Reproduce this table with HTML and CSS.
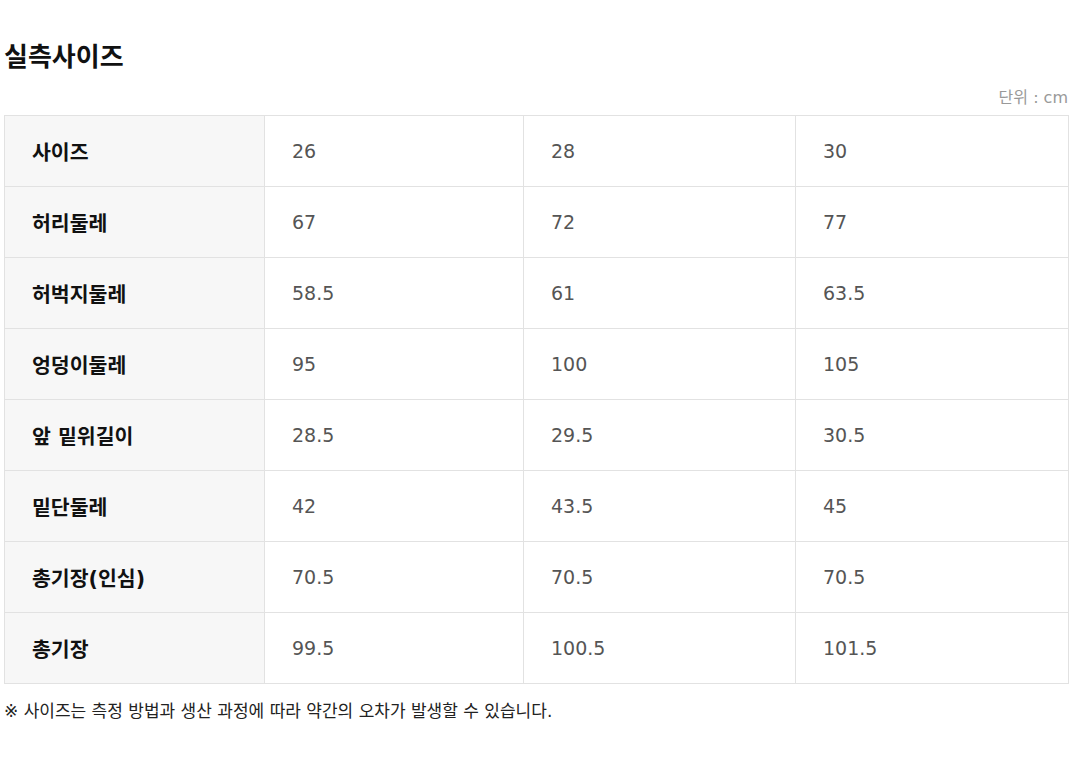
FILE: index.html
```html
<!DOCTYPE html>
<html lang="ko">
<head>
<meta charset="utf-8">
<link rel="stylesheet" href="styles.css">
</head>
<body>
<div class="page">
  <h2 class="title">실측사이즈</h2>
  <div class="unit">단위 : cm</div>
  <table class="size-table">
    <colgroup>
      <col class="c1"><col class="c2"><col class="c3"><col class="c4">
    </colgroup>
    <tbody>
      <tr><th>사이즈</th><td>26</td><td>28</td><td>30</td></tr>
      <tr><th>허리둘레</th><td>67</td><td>72</td><td>77</td></tr>
      <tr><th>허벅지둘레</th><td>58.5</td><td>61</td><td>63.5</td></tr>
      <tr><th>엉덩이둘레</th><td>95</td><td>100</td><td>105</td></tr>
      <tr><th>앞 밑위길이</th><td>28.5</td><td>29.5</td><td>30.5</td></tr>
      <tr><th>밑단둘레</th><td>42</td><td>43.5</td><td>45</td></tr>
      <tr><th>총기장(인심)</th><td>70.5</td><td>70.5</td><td>70.5</td></tr>
      <tr><th>총기장</th><td>99.5</td><td>100.5</td><td>101.5</td></tr>
    </tbody>
  </table>
  <p class="note">※ 사이즈는 측정 방법과 생산 과정에 따라 약간의 오차가 발생할 수 있습니다.</p>
</div>
</body>
</html>
```

FILE: styles.css
```css
html, body {
  margin: 0;
  padding: 0;
  background: #fff;
}
body {
  font-family: "DejaVu Sans", "Noto Sans CJK KR", sans-serif;
  color: #222;
}
.page {
  padding: 0 4px;
}
.title {
  margin: 0;
  padding-top: 42px;
  font-size: 26px;
  line-height: 30px;
  font-weight: bold;
  color: #111;
}
.unit {
  margin-top: 17px;
  text-align: right;
  font-size: 16px;
  line-height: 18px;
  color: #999;
}
.size-table {
  width: 100%;
  margin-top: 8px;
  border-collapse: collapse;
  table-layout: fixed;
  border: 1px solid #e2e2e2;
}
.c1 { width: 260px; }
.c2 { width: 259px; }
.c3 { width: 272px; }
.c4 { width: 273px; }
.size-table th,
.size-table td {
  height: 70px;
  padding: 0 0 0 27px;
  border: 1px solid #e2e2e2;
  text-align: left;
  font-size: 19px;
  vertical-align: middle;
}
.size-table th {
  background: #f7f7f7;
  color: #111;
  font-weight: bold;
  font-size: 20.5px;
}
.size-table td {
  color: #555;
  font-weight: normal;
}
.note {
  margin: 17px 0 0;
  font-size: 17px;
  line-height: 20px;
  color: #222;
}
```
